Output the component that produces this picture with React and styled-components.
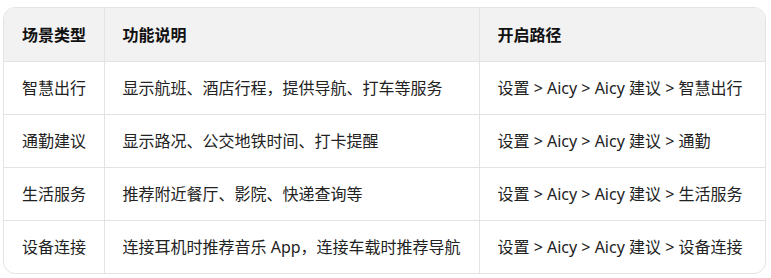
import React from 'react';
import styled, { createGlobalStyle } from 'styled-components';

const rows = [
  ['智慧出行', '显示航班、酒店行程，提供导航、打车等服务', '设置 > Aicy > Aicy 建议 > 智慧出行'],
  ['通勤建议', '显示路况、公交地铁时间、打卡提醒', '设置 > Aicy > Aicy 建议 > 通勤'],
  ['生活服务', '推荐附近餐厅、影院、快递查询等', '设置 > Aicy > Aicy 建议 > 生活服务'],
  ['设备连接', '连接耳机时推荐音乐 App，连接车载时推荐导航', '设置 > Aicy > Aicy 建议 > 设备连接'],
];

const GlobalStyle = createGlobalStyle`
  body {
    margin: 0;
    background: #ffffff;
    font-family: "Noto Sans", "Noto Sans CJK SC", sans-serif;
  }
`;

const Page = styled.div`
  padding: 7px 5px 0 3px;
`;

const Frame = styled.div`
  width: 763px;
  box-sizing: border-box;
  border: 1px solid #e3e3e3;
  border-radius: 12px;
  overflow: hidden;
`;

const Table = styled.table`
  width: 100%;
  border-collapse: collapse;
  table-layout: fixed;
`;

const Head = styled.th`
  height: 53px;
  padding: 0 18px;
  background: #f2f2f2;
  color: #111;
  font-size: 16px;
  font-weight: 700;
  text-align: left;
  white-space: nowrap;
  border-left: ${(p) => (p.$first ? 'none' : '1px solid #e3e3e3')};
  border-bottom: 1px solid #e3e3e3;
  box-sizing: border-box;
`;

const Cell = styled.td`
  height: 53px;
  padding: 0 18px;
  color: #222;
  font-size: 16px;
  line-height: 24px;
  white-space: nowrap;
  border-left: ${(p) => (p.$first ? 'none' : '1px solid #e3e3e3')};
  border-bottom: ${(p) => (p.$last ? 'none' : '1px solid #e3e3e3')};
  box-sizing: border-box;
`;

export default function App() {
  return (
    <Page>
      <GlobalStyle />
      <Frame>
        <Table>
          <colgroup>
            <col style={{ width: 100 }} />
            <col style={{ width: 375 }} />
            <col />
          </colgroup>
          <thead>
            <tr>
              <Head $first>场景类型</Head>
              <Head>功能说明</Head>
              <Head>开启路径</Head>
            </tr>
          </thead>
          <tbody>
            {rows.map((r, i) => (
              <tr key={r[0]}>
                {r.map((c, j) => (
                  <Cell key={j} $first={j === 0} $last={i === rows.length - 1}>
                    {c}
                  </Cell>
                ))}
              </tr>
            ))}
          </tbody>
        </Table>
      </Frame>
    </Page>
  );
}
